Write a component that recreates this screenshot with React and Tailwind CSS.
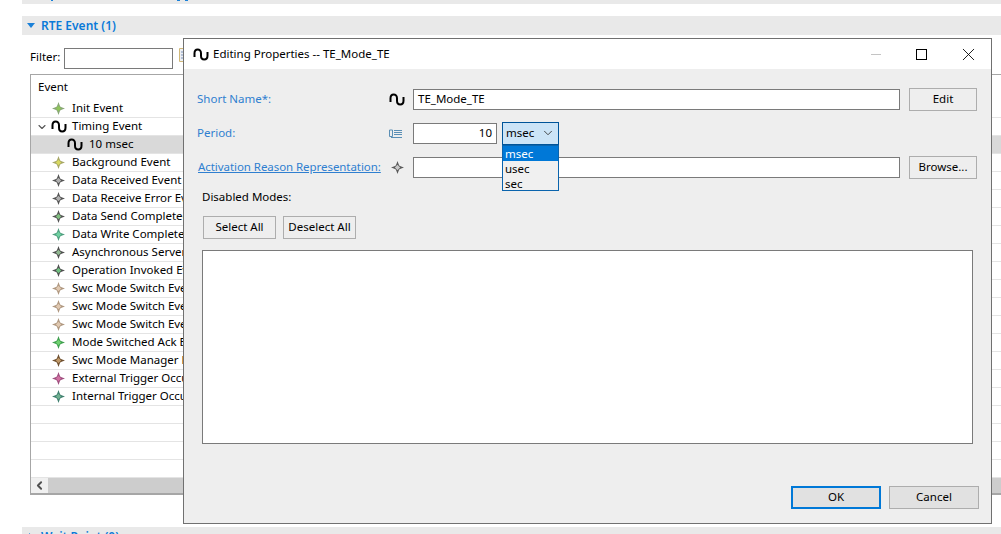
import { ChevronDown, ChevronLeft, X } from 'lucide-react'

// Filas de la tabla de eventos, con el color del centro de cada rombo
const EVENTS = [
  { label: 'Init Event', fill: '#8fc45a', edge: '#8aa878' },
  { label: 'Timing Event', wave: true, open: true },
  { label: '10 msec', wave: true, child: true, selected: true },
  { label: 'Background Event', fill: '#d8d860', edge: '#a8a868' },
  { label: 'Data Received Event', fill: '#b0b0b0', edge: '#555555' },
  { label: 'Data Receive Error Event', fill: '#b0b0b0', edge: '#555555' },
  { label: 'Data Send Completed Event', fill: '#80c080', edge: '#555555' },
  { label: 'Data Write Completed Event', fill: '#70d0a0', edge: '#50a080' },
  { label: 'Asynchronous Server Call', fill: '#90b890', edge: '#505050' },
  { label: 'Operation Invoked Event', fill: '#70c080', edge: '#505050' },
  { label: 'Swc Mode Switch Event', fill: '#e0c8b0', edge: '#b09880' },
  { label: 'Swc Mode Switch Event', fill: '#e0c8b0', edge: '#b09880' },
  { label: 'Swc Mode Switch Event', fill: '#e0c8b0', edge: '#b09880' },
  { label: 'Mode Switched Ack Event', fill: '#70d070', edge: '#40a050' },
  { label: 'Swc Mode Manager Error', fill: '#c09868', edge: '#705030' },
  { label: 'External Trigger Occurred', fill: '#d070a0', edge: '#a05080' },
  { label: 'Internal Trigger Occurred', fill: '#70b090', edge: '#408070' },
  {},
  {},
  {},
  {},
]

const WaveIcon = () => (
  <svg viewBox="0 0 16 13" className="w-4 h-[13px] shrink-0" fill="none" stroke="#000" strokeWidth="2">
    <path d="M1.5 9V5.2C1.5 3 3 1.5 4.7 1.5S8 3 8 5.2v2.6c0 2.2 1.4 3.7 3.2 3.7s3.3-1.5 3.3-3.7V4" />
  </svg>
)

const DiamondIcon = ({ fill = '#b0b0b0', edge = '#555555' }) => (
  <svg viewBox="0 0 13 13" className="w-[13px] h-[13px] shrink-0">
    <path d="M6.5 0 L8.2 4.8 L13 6.5 L8.2 8.2 L6.5 13 L4.8 8.2 L0 6.5 L4.8 4.8 Z" fill={edge} />
    <rect x="3.9" y="3.9" width="5.2" height="5.2" transform="rotate(45 6.5 6.5)" fill={edge} />
    <rect x="4.6" y="4.6" width="3.8" height="3.8" transform="rotate(45 6.5 6.5)" fill={fill} />
  </svg>
)

const PropertyIcon = () => (
  <svg viewBox="0 0 13 9" className="w-[13px] h-[9px] shrink-0" fill="none" stroke="#5b8fb5" strokeWidth="1">
    <path d="M0.5 1V7.5H3.5V1ZM5 1.5H13M5 3.5H13M5 5.5H13M2 8.5H13" />
  </svg>
)

const Button = ({ children, className = '' }) => (
  <div className={`h-[23px] pb-px flex items-center justify-center border border-[#adadad] bg-[#eeeeee] text-black ${className}`}>
    {children}
  </div>
)

const SectionBar = ({ open, title, className = '' }) => (
  <div className={`ml-[22px] bg-[#e9e9e9] flex items-center gap-[6px] pl-[5px] text-[12px] text-[#0a7ad8] font-semibold ${className}`}>
    <span className={open
      ? 'w-0 h-0 border-x-[4px] border-x-transparent border-t-[5px] border-t-[#1a80d8]'
      : 'ml-[2px] mr-px w-0 h-0 border-y-[4px] border-y-transparent border-l-[5px] border-l-[#1a80d8]'} />
    {title}
  </div>
)

const EventRow = ({ label, fill, edge, wave, open, child, selected }) => (
  <div className={`h-[18px] flex items-center border-b border-[#e4e4e4] whitespace-nowrap ${selected ? 'bg-[#d9d9d9]' : ''}`}>
    {label && (wave ? (
      <div className={`flex items-center ${child ? 'pl-[36px] gap-[6px]' : 'pl-[5px] gap-[5px]'}`}>
        {open && <ChevronDown size={12} strokeWidth={2.2} className="text-[#555555] shrink-0 mr-[-2px]" />}
        <WaveIcon />
        <span className="pb-px">{label}</span>
      </div>
    ) : (
      <div className="flex items-center pl-[21px] gap-[7px]">
        <DiamondIcon fill={fill} edge={edge} />
        <span className="pb-px">{label}</span>
      </div>
    ))}
  </div>
)

const App = () => {
  return (
    <div className="relative w-[1001px] h-[534px] overflow-hidden bg-white text-[11.5px] text-black font-['Noto_Sans','Liberation_Sans',sans-serif]">
      {/* Seccion anterior cortada por arriba: solo asoman los rabos del texto */}
      <div className="ml-[22px] h-[4px] bg-[#e9e9e9] flex items-start">
        <span className="ml-[29px] w-[2px] h-px bg-[#1a80d8]" />
        <span className="ml-[124px] w-[3px] h-px bg-[#1a80d8]" />
        <span className="ml-[5px] w-[3px] h-px bg-[#1a80d8]" />
      </div>

      <SectionBar open title="RTE Event (1)" className="mt-[12px] h-[19px]" />

      {/* Filtro */}
      <div className="flex items-center ml-[30px] mt-[13px] h-[21px]">
        <span className="w-[34px] pb-[4px]">Filter:</span>
        <div className="w-[109px] h-[21px] bg-white border border-[#7a7a7a]" />
        <svg viewBox="0 0 14 14" className="w-[14px] h-[14px] ml-[6px] mb-[7px] shrink-0" fill="#eef0f4" stroke="#d0b878">
          <path d="M0.5 0.5H13.5V13.5H0.5Z" />
          <path d="M2 4H12M2 7H12M2 10H12" stroke="#7d93b8" />
        </svg>
      </div>

      {/* Tabla de eventos */}
      <div className="ml-[30px] mt-[5px] w-[1000px] h-[421px] border-2 border-[#a6a6a6] border-r-0 border-t-[1px] border-l-[1px] flex flex-col">
        <div className="h-[25px] pl-[7px] pb-[2px] flex items-center">Event</div>
        {EVENTS.map((ev, i) => (
          <EventRow key={i} {...ev} />
        ))}
        <div className="mt-auto h-[15px] flex bg-[#cdcdcd]">
          <div className="w-[17px] bg-[#f0f0f0] flex items-center justify-center">
            <ChevronLeft size={13} strokeWidth={3.5} className="text-[#505050]" />
          </div>
        </div>
      </div>

      <SectionBar title="Wait Point (0)" className="mt-[32px] h-[19px]" />

      {/* Dialogo de propiedades */}
      <div className="absolute left-[183px] top-[38px] w-[809px] h-[486px] border border-[#707070] bg-[#eeeeee] flex flex-col">
        <div className="h-[30px] bg-white flex items-center pl-[9px] gap-[4px]">
          <WaveIcon />
          <span>Editing Properties -- TE_Mode_TE</span>
          <div className="ml-auto flex items-center">
            <span className="w-[10px] h-px bg-[#c4c4c4] mr-[35px]" />
            <span className="w-[11px] h-[11px] border-[1.5px] border-black mr-[31px]" />
            <X size={21} strokeWidth={1} className="text-black mr-[12px]" />
          </div>
        </div>

        <div className="flex-1 flex flex-col pl-[13px] pt-[19px]">
          <div className="flex items-center h-[23px]">
            <span className="w-[192px] pb-px text-[#2f7fd0]">Short Name*:</span>
            <div className="w-[24px]"><WaveIcon /></div>
            <div className="w-[487px] h-[21px] pb-px bg-white border border-[#7a7a7a] flex items-center pl-[4px]">TE_Mode_TE</div>
            <Button className="ml-[9px] w-[68px]">Edit</Button>
          </div>

          <div className="flex items-center h-[23px] mt-[11px]">
            <span className="w-[192px] pb-px text-[#2f7fd0]">Period:</span>
            <div className="w-[24px]"><PropertyIcon /></div>
            <div className="w-[84px] h-[21px] pb-px bg-white border border-[#7a7a7a] flex items-center justify-end pr-[4px]">10</div>
            <div className="relative ml-[5px]">
              <div className="w-[57px] h-[23px] pb-px bg-[#cce4f7] border border-[#005499] flex items-center justify-between pl-[3px] pr-[3px]">
                msec
                <ChevronDown size={14} strokeWidth={1.5} className="text-[#333333]" />
              </div>
              <div className="absolute left-0 top-[23px] z-10 w-[57px] h-[46px] bg-[#f0f0f0] border border-[#0a64ad] leading-[15px]">
                <div className="h-[15px] bg-[#0078d7] text-white pl-[2px]">msec</div>
                <div className="h-[15px] pl-[2px]">usec</div>
                <div className="h-[15px] pl-[2px]">sec</div>
              </div>
            </div>
          </div>

          <div className="flex items-center h-[23px] mt-[11px]">
            <span className="w-[192px] pl-px pb-px text-[#2f7fd0] underline whitespace-nowrap tracking-[-0.06px]">Activation Reason Representation:</span>
            <div className="w-[24px] pl-[2px]"><DiamondIcon fill="#c8c8c8" edge="#5a5a5a" /></div>
            <div className="w-[487px] h-[21px] bg-white border border-[#7a7a7a]" />
            <Button className="ml-[9px] w-[68px]">Browse...</Button>
          </div>

          <div className="ml-[5px] mt-[8px] h-[20px] flex items-center">Disabled Modes:</div>

          <div className="flex ml-[6px] mt-[9px] gap-[7px]">
            <Button className="w-[73px]">Select All</Button>
            <Button className="w-[73px]">Deselect All</Button>
          </div>

          <div className="ml-[5px] mt-[11px] w-[771px] h-[194px] bg-white border border-[#7a7a7a]" />

          <div className="flex ml-[594px] mt-[42px] gap-[8px]">
            <div className="w-[90px] h-[23px] pb-px flex items-center justify-center bg-[#e1e1e1] border-2 border-[#0078d7]">OK</div>
            <div className="w-[90px] h-[23px] pb-px flex items-center justify-center bg-[#e1e1e1] border border-[#adadad]">Cancel</div>
          </div>
        </div>
      </div>
    </div>
  )
}

export default App
